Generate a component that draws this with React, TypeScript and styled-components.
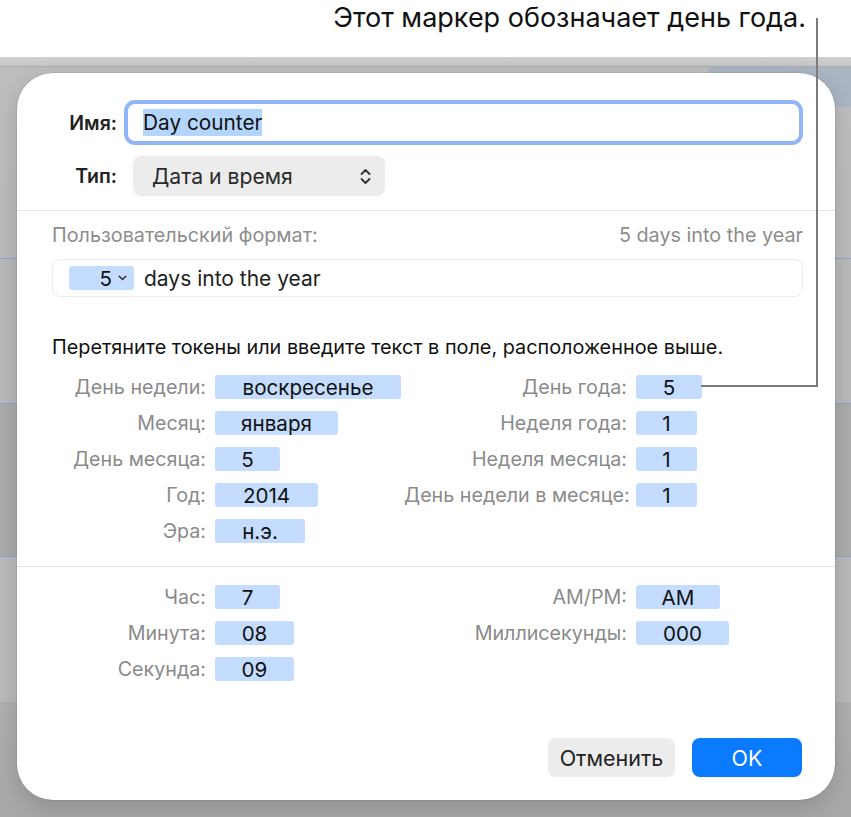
import React from "react";
import styled, { createGlobalStyle } from "styled-components";

const UI_FONT = `"Inter", "Liberation Sans", sans-serif`;

const GlobalStyle = createGlobalStyle`
  html, body {
    margin: 0;
    padding: 0;
    background: #fff;
  }
  body {
    font-family: ${UI_FONT};
    -webkit-font-smoothing: antialiased;
  }
`;

const Page = styled.div`
  position: relative;
  width: 851px;
  height: 817px;
  overflow: hidden;
  display: flex;
  flex-direction: column;
`;

const CalloutBar = styled.div`
  height: 57px;
  flex-shrink: 0;
  box-sizing: border-box;
  background: #fff;
  display: flex;
  justify-content: flex-end;
  padding: 2px 45px 0 0;
  font-size: 27px;
  line-height: 32px;
  color: #111;
`;

const LeaderLine = styled.svg`
  position: absolute;
  left: 0;
  top: 0;
  pointer-events: none;
`;

// the app window behind the sheet: toolbar strip, table rows
const Backdrop = styled.div`
  flex: 1;
  padding: 16px 16px 0 17px;
  background:
    linear-gradient(#abb5c3, #abb5c3) 708px 10px / 143px 40px no-repeat,
    linear-gradient(
      to bottom,
      #d0d0d0 0,
      #c6c6c6 9px,
      #a9a9a9 9px,
      #a9a9a9 10px,
      #bebebe 10px,
      #bcbcbc 201px,
      #86a3d4 201px,
      #86a3d4 202px,
      #bababa 202px,
      #bababa 346px,
      #86a3d4 346px,
      #86a3d4 347px,
      #adadad 347px,
      #adadad 499px,
      #86a3d4 499px,
      #86a3d4 500px,
      #bbbbbb 500px,
      #bbbbbb 645px,
      #b0b0b0 645px,
      #a8a8a8 100%
    );
`;

const Dialog = styled.div`
  width: 818px;
  height: 727px;
  box-sizing: border-box;
  background: #fff;
  border-radius: 36px;
  box-shadow: 0 0 0 0.5px rgba(0, 0, 0, 0.12), 0 8px 24px rgba(0, 0, 0, 0.16);
  display: flex;
  flex-direction: column;
  padding: 27px 32px 23px 35px;
`;

const HeaderRow = styled.div<{ $top?: number }>`
  display: flex;
  align-items: center;
  gap: 7px;
  margin-top: ${({ $top }) => $top ?? 0}px;
`;

const HeaderLabel = styled.div`
  width: 65px;
  text-align: right;
  font-size: 19.5px;
  font-weight: 600;
  color: #222;
  white-space: nowrap;
`;

const NameField = styled.div`
  flex: 1;
  height: 45px;
  box-sizing: border-box;
  border: 4px solid #90b6f7;
  border-radius: 11px;
  display: flex;
  align-items: center;
  padding-left: 15px;
`;

const Selected = styled.span`
  background: #b4d5fe;
  font-size: 20.8px;
  line-height: 27px;
  color: #111;
`;

const PopupButton = styled.div`
  margin-left: 9px;
  width: 252px;
  height: 40px;
  box-sizing: border-box;
  background: #ececec;
  border-radius: 8px;
  display: flex;
  align-items: center;
  justify-content: space-between;
  padding: 0 14px 0 19px;
  font-size: 21.2px;
  color: #2a2a2a;
`;

const Separator = styled.div<{ $top: number }>`
  height: 1px;
  background: #e4e4e4;
  margin: ${({ $top }) => $top}px -32px 0 -35px;
  flex-shrink: 0;
`;

const FormatHeader = styled.div`
  margin-top: 13px;
  display: flex;
  justify-content: space-between;
  font-size: 19.8px;
  line-height: 22px;
  color: #8d8d8d;
`;

const FormatField = styled.div`
  margin-top: 13px;
  height: 38px;
  box-sizing: border-box;
  border: 1px solid #ececec;
  border-radius: 8px;
  display: flex;
  align-items: center;
  padding-left: 16px;
  font-size: 21px;
  color: #222;
`;

const MenuToken = styled.div`
  width: 65px;
  height: 24px;
  box-sizing: border-box;
  background: #c3dcff;
  border-radius: 3px;
  display: flex;
  align-items: center;
  justify-content: flex-end;
  gap: 6px;
  padding-right: 7px;
  margin-right: 10px;
  font-size: 20.5px;
  color: #111;
`;

const Hint = styled.div`
  margin-top: 39px;
  font-size: 19.85px;
  line-height: 22px;
  color: #111;
`;

const TokenGrid = styled.div<{ $top: number }>`
  margin-top: ${({ $top }) => $top}px;
  display: grid;
  grid-template-columns: 154px 180px 223px auto;
  grid-auto-rows: 24px;
  column-gap: 9px;
  row-gap: 12px;
  align-items: center;
`;

const FieldLabel = styled.div`
  text-align: right;
  font-size: 19.7px;
  color: #8a8a8a;
  white-space: nowrap;
`;

const Token = styled.div<{ $w: number }>`
  width: ${({ $w }) => $w}px;
  height: 24px;
  background: #c3dcff;
  border-radius: 3px;
  display: flex;
  align-items: center;
  justify-content: center;
  font-size: 20.6px;
  color: #111;
`;

const Footer = styled.div`
  margin-top: auto;
  display: flex;
  justify-content: flex-end;
  align-items: center;
  gap: 17px;
  padding-right: 1px;
`;

const Button = styled.div<{ $primary?: boolean; $w: number }>`
  width: ${({ $w }) => $w}px;
  height: 39px;
  border-radius: 8px;
  display: flex;
  align-items: center;
  justify-content: center;
  font-size: 21.5px;
  background: ${({ $primary }) => ($primary ? "#0a7aff" : "#ececec")};
  color: ${({ $primary }) => ($primary ? "#fff" : "#222")};
`;

const UpDownChevron = () => (
  <svg width="11" height="17" viewBox="0 0 11 17" fill="none">
    <path d="M1.5 6 L5.5 2 L9.5 6" stroke="#333" strokeWidth="1.8" strokeLinecap="round" strokeLinejoin="round" />
    <path d="M1.5 11 L5.5 15 L9.5 11" stroke="#333" strokeWidth="1.8" strokeLinecap="round" strokeLinejoin="round" />
  </svg>
);

const SmallChevron = () => (
  <svg width="9" height="6" viewBox="0 0 9 6" fill="none">
    <path d="M1.2 1.3 L4.5 4.5 L7.8 1.3" stroke="#333" strokeWidth="1.6" strokeLinecap="round" strokeLinejoin="round" />
  </svg>
);

type Field = { label: string; value: string; w: number };

const dateLeft: Field[] = [
  { label: "День недели:", value: "воскресенье", w: 186 },
  { label: "Месяц:", value: "января", w: 123 },
  { label: "День месяца:", value: "5", w: 65 },
  { label: "Год:", value: "2014", w: 103 },
  { label: "Эра:", value: "н.э.", w: 90 },
];

const dateRight: Field[] = [
  { label: "День года:", value: "5", w: 66 },
  { label: "Неделя года:", value: "1", w: 61 },
  { label: "Неделя месяца:", value: "1", w: 61 },
  { label: "День недели в месяце:", value: "1", w: 61 },
];

const timeLeft: Field[] = [
  { label: "Час:", value: "7", w: 65 },
  { label: "Минута:", value: "08", w: 79 },
  { label: "Секунда:", value: "09", w: 79 },
];

const timeRight: Field[] = [
  { label: "AM/PM:", value: "AM", w: 84 },
  { label: "Миллисекунды:", value: "000", w: 93 },
];

const FieldRows = ({ left, right }: { left: Field[]; right: Field[] }) => (
  <>
    {left.map((l, i) => {
      const r = right[i];
      return (
        <React.Fragment key={l.label}>
          <FieldLabel>{l.label}</FieldLabel>
          <Token $w={l.w}>{l.value}</Token>
          {r ? <FieldLabel>{r.label}</FieldLabel> : <span />}
          {r ? <Token $w={r.w}>{r.value}</Token> : <span />}
        </React.Fragment>
      );
    })}
  </>
);

export default function App() {
  return (
    <>
      <GlobalStyle />
      <Page>
        <CalloutBar>Этот маркер обозначает день года.</CalloutBar>
        <Backdrop>
          <Dialog>
            <HeaderRow>
              <HeaderLabel>Имя:</HeaderLabel>
              <NameField>
                <Selected>Day counter</Selected>
              </NameField>
            </HeaderRow>
            <HeaderRow $top={11}>
              <HeaderLabel>Тип:</HeaderLabel>
              <PopupButton>
                Дата и время
                <UpDownChevron />
              </PopupButton>
            </HeaderRow>
            <Separator $top={14} />
            <FormatHeader>
              <span>Пользовательский формат:</span>
              <span>5 days into the year</span>
            </FormatHeader>
            <FormatField>
              <MenuToken>
                5
                <SmallChevron />
              </MenuToken>
              days into the year
            </FormatField>
            <Hint>Перетяните токены или введите текст в поле, расположенное выше.</Hint>
            <TokenGrid $top={17}>
              <FieldRows left={dateLeft} right={dateRight} />
            </TokenGrid>
            <Separator $top={23} />
            <TokenGrid $top={18}>
              <FieldRows left={timeLeft} right={timeRight} />
            </TokenGrid>
            <Footer>
              <Button $w={127}>Отменить</Button>
              <Button $primary $w={110}>OK</Button>
            </Footer>
          </Dialog>
        </Backdrop>
        <LeaderLine width="851" height="817">
          <path d="M817 18 V386 H701" stroke="#7b7b7b" strokeWidth="2" fill="none" />
        </LeaderLine>
      </Page>
    </>
  );
}
